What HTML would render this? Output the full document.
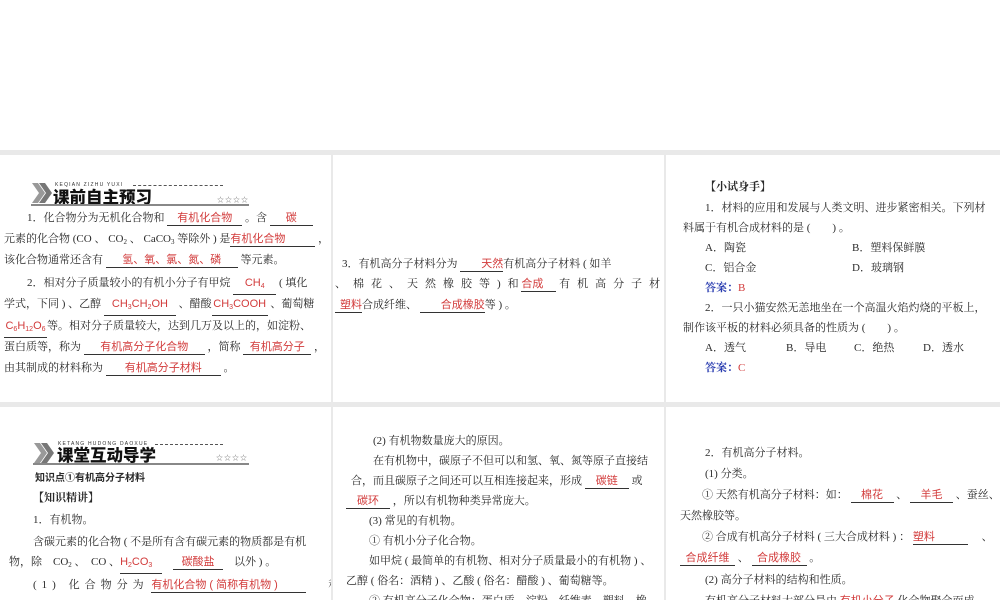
<!DOCTYPE html>
<html><head><meta charset="utf-8"><style>
*{margin:0;padding:0;box-sizing:border-box}
body{width:1000px;height:600px;background:#fff;position:relative;overflow:hidden;font-family:"Liberation Serif","Noto Serif CJK SC","Noto Sans CJK SC",serif;font-size:11px;color:#2a2a2a}
.gray{position:absolute;background:#e9e9e9}
.p{position:absolute;background:#fff;overflow:hidden}
.l{position:absolute;white-space:nowrap;line-height:16px}
.b{display:inline-block;border-bottom:1px solid #333;color:#d23b3b;text-align:center;line-height:14px;font-family:"Liberation Sans","Noto Sans CJK SC",sans-serif}
.r{color:#d23b3b}
.bl{color:#2a3db0;font-weight:bold}
sub{font-size:7px;vertical-align:-2px}
.chev{position:absolute;width:20px;height:20px}
.tt{position:absolute;font-family:"Noto Sans CJK SC",sans-serif;font-weight:900;font-size:16.5px;line-height:20px;color:#111}
.py{position:absolute;font-family:"Liberation Sans",sans-serif;font-size:5px;letter-spacing:1.2px;color:#333}
.ul{position:absolute;height:2px;background:#888}
.st{position:absolute;font-size:7px;color:#777;letter-spacing:1px}
.dash{position:absolute;border-top:1px dashed #555}
.sp{letter-spacing:7px}
</style></head><body>
<div class="gray" style="left:0;top:150px;width:1000px;height:450px"></div>

<div class="p" style="left:0;top:155px;width:331px;height:247px">
 <svg class="chev" style="left:32px;top:28px" viewBox="0 0 20 20"><path d="M0 0h6l7 10-7 10H0l7-10z" fill="#999"/><path d="M7 0h6l7 10-7 10H7l7-10z" fill="#777"/></svg>
 <div class="py" style="left:55px;top:27px">KEQIAN ZIZHU YUXI</div>
 <div class="dash" style="left:133px;top:30px;width:90px"></div>
 <div class="tt" style="left:53px;top:31px">课前自主预习</div>
 <div class="st" style="left:217px;top:40px">☆☆☆☆</div>
 <div class="ul" style="left:31px;top:49px;width:218px"></div>
 <div class="l" style="left:27px;top:55px">1．化合物分为无机化合物和 <span class="b" style="width:75px">有机化合物</span> 。含 <span class="b" style="width:43px">碳</span></div>
 <div class="l" style="left:4px;top:76px">元素的化合物 (CO 、 CO<sub>2</sub> 、 CaCO<sub>3</sub> 等除外 ) 是<span class="b" style="width:85px;text-align:left">有机化合物</span> ，</div>
 <div class="l" style="left:4px;top:97px">该化合物通常还含有 <span class="b" style="width:132px">氢、氧、氯、氮、磷</span> 等元素。</div>
 <div class="l" style="left:27px;top:120px">2．相对分子质量较小的有机小分子有甲烷 <span class="b" style="width:43px">CH<sub>4</sub></span> ( 填化</div>
 <div class="l" style="left:4px;top:141px">学式，下同 ) 、乙醇 <span class="b" style="width:72px">CH<sub>3</sub>CH<sub>2</sub>OH</span> 、醋酸<span class="b" style="width:56px">CH<sub>3</sub>COOH</span> 、葡萄糖</div>
 <div class="l" style="left:4px;top:163px"><span class="b" style="width:43px">C<sub>6</sub>H<sub>12</sub>O<sub>6</sub></span>等。相对分子质量较大，达到几万及以上的，如淀粉、</div>
 <div class="l" style="left:4px;top:184px">蛋白质等，称为 <span class="b" style="width:121px">有机高分子化合物</span> ，简称 <span class="b" style="width:68px">有机高分子</span> ，</div>
 <div class="l" style="left:4px;top:205px">由其制成的材料称为 <span class="b" style="width:115px">有机高分子材料</span> 。</div>
</div>

<div class="p" style="left:333px;top:155px;width:331px;height:247px">
 <div class="l" style="left:9px;top:101px">3．有机高分子材料分为 <span class="b" style="width:43px;text-align:right">天然</span>有机高分子材料 ( 如羊</div>
 <div class="l" style="left:2px;top:121px"><span class="sp">、棉花、天然橡胶等)</span>和 <span class="b" style="width:35px;text-align:left">合成</span> <span class="sp">有机高分子材料(</span></div>
 <div class="l" style="left:2px;top:142px"><span class="b" style="width:27px;text-align:right">塑料</span>合成纤维、 <span class="b" style="width:65px;text-align:right">合成橡胶</span>等 ) 。</div>
</div>

<div class="p" style="left:666px;top:155px;width:334px;height:247px">
 <div class="l" style="left:39px;top:24px;font-weight:bold">【小试身手】</div>
 <div class="l" style="left:39px;top:45px">1．材料的应用和发展与人类文明、进步紧密相关。下列材</div>
 <div class="l" style="left:17px;top:65px">料属于有机合成材料的是 (　　) 。</div>
 <div class="l" style="left:39px;top:85px">A．陶瓷</div>
 <div class="l" style="left:186px;top:85px">B．塑料保鲜膜</div>
 <div class="l" style="left:39px;top:105px">C．铝合金</div>
 <div class="l" style="left:186px;top:105px">D．玻璃钢</div>
 <div class="l" style="left:39px;top:125px"><span class="bl">答案：</span><span class="r">B</span></div>
 <div class="l" style="left:39px;top:145px">2．一只小猫安然无恙地坐在一个高温火焰灼烧的平板上，</div>
 <div class="l" style="left:17px;top:165px">制作该平板的材料必须具备的性质为 (　　) 。</div>
 <div class="l" style="left:39px;top:185px">A．透气</div>
 <div class="l" style="left:120px;top:185px">B．导电</div>
 <div class="l" style="left:188px;top:185px">C．绝热</div>
 <div class="l" style="left:257px;top:185px">D．透水</div>
 <div class="l" style="left:39px;top:205px"><span class="bl">答案：</span><span class="r">C</span></div>
</div>

<div class="p" style="left:0;top:407px;width:331px;height:193px">
 <svg class="chev" style="left:34px;top:36px" viewBox="0 0 20 20"><path d="M0 0h6l7 10-7 10H0l7-10z" fill="#999"/><path d="M7 0h6l7 10-7 10H7l7-10z" fill="#777"/></svg>
 <div class="py" style="left:58px;top:34px">KETANG HUDONG DAOXUE</div>
 <div class="dash" style="left:155px;top:37px;width:68px"></div>
 <div class="tt" style="left:57px;top:37px">课堂互动导学</div>
 <div class="st" style="left:216px;top:46px">☆☆☆☆</div>
 <div class="ul" style="left:33px;top:56px;width:216px"></div>
 <div class="l" style="left:35px;top:62px;font-size:10px;font-weight:bold;font-family:'Noto Sans CJK SC',sans-serif">知识点①有机高分子材料</div>
 <div class="l" style="left:33px;top:83px;font-weight:bold">【知识精讲】</div>
 <div class="l" style="left:33px;top:105px">1．有机物。</div>
 <div class="l" style="left:33px;top:127px">含碳元素的化合物 ( 不是所有含有碳元素的物质都是有机</div>
 <div class="l" style="left:9px;top:147px">物，除　CO<sub>2</sub> 、　CO 、<span class="b" style="width:42px;text-align:left">H<sub>2</sub>CO<sub>3</sub></span>　<span class="b" style="width:50px">碳酸盐</span>　以外 ) 。</div>
 <div class="l" style="left:33px;top:170px"><span style="letter-spacing:5px">(1) 化合物分为</span> <span class="b" style="width:155px;text-align:left">有机化合物 ( 简称有机物 )</span>　　和</div>
</div>

<div class="p" style="left:333px;top:407px;width:331px;height:193px">
 <div class="l" style="left:40px;top:26px">(2) 有机物数量庞大的原因。</div>
 <div class="l" style="left:40px;top:46px">在有机物中，碳原子不但可以和氢、氧、氮等原子直接结</div>
 <div class="l" style="left:18px;top:66px">合，而且碳原子之间还可以互相连接起来，形成 <span class="b" style="width:44px">碳链</span> 或</div>
 <div class="l" style="left:13px;top:86px"><span class="b" style="width:44px">碳环</span> ，所以有机物种类异常庞大。</div>
 <div class="l" style="left:36px;top:106px">(3) 常见的有机物。</div>
 <div class="l" style="left:36px;top:126px">① 有机小分子化合物。</div>
 <div class="l" style="left:36px;top:146px">如甲烷 ( 最简单的有机物、相对分子质量最小的有机物 ) 、</div>
 <div class="l" style="left:13px;top:166px">乙醇 ( 俗名：酒精 ) 、乙酸 ( 俗名：醋酸 ) 、葡萄糖等。</div>
 <div class="l" style="left:36px;top:186px">② 有机高分子化合物：蛋白质、淀粉、纤维素、塑料、橡</div>
</div>

<div class="p" style="left:666px;top:407px;width:334px;height:193px">
 <div class="l" style="left:39px;top:38px">2．有机高分子材料。</div>
 <div class="l" style="left:39px;top:59px">(1) 分类。</div>
 <div class="l" style="left:36px;top:80px">① 天然有机高分子材料：如： <span class="b" style="width:43px">棉花</span> 、 <span class="b" style="width:43px">羊毛</span> 、蚕丝、</div>
 <div class="l" style="left:14px;top:101px">天然橡胶等。</div>
 <div class="l" style="left:36px;top:122px">② 合成有机高分子材料 ( 三大合成材料 ) ： <span class="b" style="width:55px;text-align:left">塑料</span>　 、</div>
 <div class="l" style="left:14px;top:143px"><span class="b" style="width:55px">合成纤维</span> 、 <span class="b" style="width:55px">合成橡胶</span> 。</div>
 <div class="l" style="left:39px;top:165px">(2) 高分子材料的结构和性质。</div>
 <div class="l" style="left:39px;top:186px">有机高分子材料大部分是由 <span class="b" style="width:55px">有机小分子</span> 化合物聚合而成</div>
</div>
</body></html>
